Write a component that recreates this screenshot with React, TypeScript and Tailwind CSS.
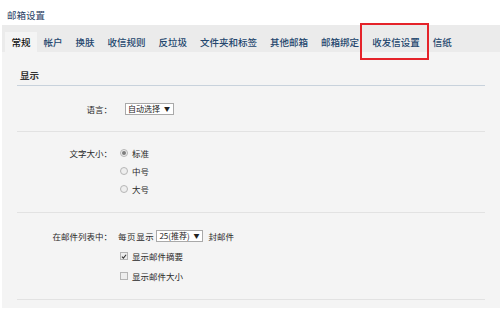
import React from 'react';

const tabs = ['常规', '帐户', '换肤', '收信规则', '反垃圾', '文件夹和标签', '其他邮箱', '邮箱绑定', '收发信设置', '信纸'];

function Radio({ checked }: { checked?: boolean }) {
  return (
    <span className="w-[8px] h-[8px] rounded-full border border-[#b5b5b5] bg-[#eeeeee] flex items-center justify-center">
      {checked && <span className="w-[4px] h-[4px] rounded-full bg-[#7d7d7d]" />}
    </span>
  );
}

function Check({ checked }: { checked?: boolean }) {
  return (
    <span className="w-[8px] h-[8px] border border-[#b5b5b5] bg-[#eeeeee] flex items-center justify-center">
      {checked && (
        <svg width="7" height="7" viewBox="0 0 8 8">
          <path d="M1.2 4.2 L3.2 6.2 L6.8 1.6" fill="none" stroke="#333" strokeWidth="1.4" />
        </svg>
      )}
    </span>
  );
}

function Select({ label, w }: { label: string; w: string }) {
  return (
    <span className={`${w} h-[12px] border border-[#a9a9a9] bg-white flex items-center justify-between pl-[2px] pr-[3px] text-[8px] leading-none text-[#222]`}>
      <span>{label}</span>
      <span className="text-[6px]">▼</span>
    </span>
  );
}

export default function App() {
  return (
    <div
      className="w-[500px] h-[309px] bg-white relative overflow-hidden text-[9.5px] leading-[12px] text-[#333]"
      style={{ fontFamily: '"Noto Sans CJK SC", "Noto Sans", sans-serif' }}
    >
      <div className="h-[25px] pt-[9px] pl-[7px] text-[#1f3d63]">邮箱设置</div>

      <div className="ml-[2px] h-[283px] bg-[#f4f4f4] flex flex-col">
        {/* tabs */}
        <div className="h-[27px] bg-[#ebebeb] flex items-end pl-[3px]">
          {tabs.map((t, i) => (
            <div
              key={t}
              className={`h-[20px] px-[6.5px] flex items-center font-medium ${i === 0 ? 'bg-[#f4f4f4] text-[#111]' : 'text-[#23466d]'}`}
            >
              {t}
            </div>
          ))}
        </div>

        <div className="px-[15px] flex flex-col text-[8.5px] text-[#2a2a2a]">
          <div className="pt-[17px] pb-[4px] pl-[3px] text-[9.5px] font-bold text-[#333] border-b border-[#c8d2dc]">显示</div>

          {/* language */}
          <div className="h-[46px] flex items-center border-b border-[#e2e2e2]">
            <div className="w-[95px] text-right">语言：</div>
            <div className="ml-[13px]">
              <Select label="自动选择" w="w-[49px]" />
            </div>
          </div>

          {/* font size */}
          <div className="pt-[12px] pb-[14px] flex border-b border-[#e2e2e2]">
            <div className="w-[95px] text-right h-[18px] flex items-center justify-end">文字大小：</div>
            <div className="ml-[8px] flex flex-col">
              {['标准', '中号', '大号'].map((t, i) => (
                <div key={t} className="h-[18px] flex items-center gap-[4px]">
                  <Radio checked={i === 0} />
                  <span>{t}</span>
                </div>
              ))}
            </div>
          </div>

          {/* mail list */}
          <div className="pt-[15px] pb-[15px] flex border-b border-[#e2e2e2]">
            <div className="w-[95px] text-right h-[16px] flex items-center justify-end">在邮件列表中：</div>
            <div className="ml-[6px] flex flex-col gap-[4px]">
              <div className="h-[16px] flex items-center">
                <span className="tracking-[0.6px]">每页显示</span>
                <span className="ml-[2px]">
                  <Select label="25(推荐)" w="w-[47px]" />
                </span>
                <span className="ml-[5px]">封邮件</span>
              </div>
              <div className="h-[16px] flex items-center gap-[4px] pl-[2px]">
                <Check checked />
                <span>显示邮件摘要</span>
              </div>
              <div className="h-[16px] flex items-center gap-[4px] pl-[2px]">
                <Check />
                <span>显示邮件大小</span>
              </div>
            </div>
          </div>
        </div>
      </div>

      {/* annotation box */}
      <div className="absolute left-[360px] top-[23px] w-[69px] h-[37px] border-2 border-[#e5232a]" />
    </div>
  );
}
